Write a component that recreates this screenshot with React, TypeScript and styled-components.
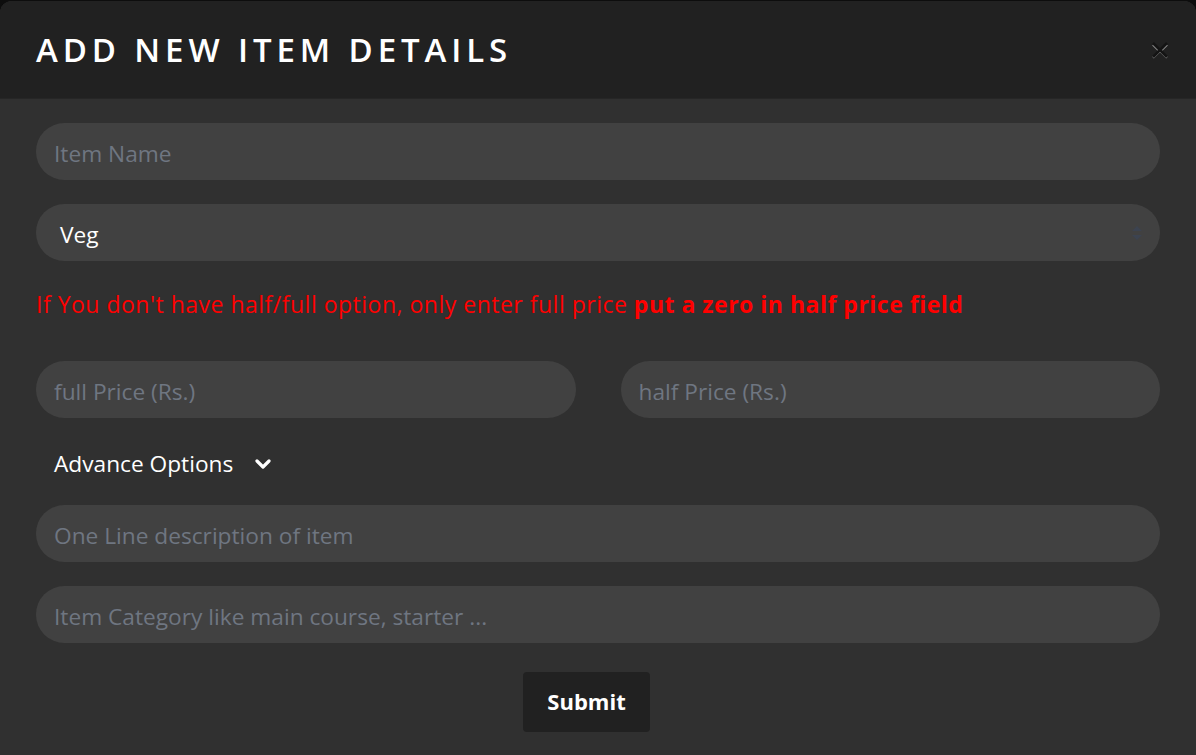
import React from 'react';
import styled, { createGlobalStyle } from 'styled-components';

const GlobalStyle = createGlobalStyle`
  body {
    margin: 0;
    background: #0d0d0d;
    font-family: 'Open Sans', 'Noto Sans', sans-serif;
  }
`;

const Modal = styled.div`
  margin-top: 1px;
  height: 754px;
  background: #303030;
  border-radius: 12px 12px 0 0;
  overflow: hidden;
  display: flex;
  flex-direction: column;
`;

const Header = styled.div`
  height: 97px;
  background: #212121;
  border-bottom: 1px solid #262626;
  display: flex;
  align-items: center;
  justify-content: space-between;
  padding: 0 22px 0 36px;
`;

const Title = styled.h1`
  margin: 0;
  color: #fff;
  font-size: 33px;
  font-weight: 600;
  letter-spacing: 4.9px;
`;

const CloseButton = styled.button`
  width: 28px;
  height: 28px;
  border: none;
  background: transparent;
  padding: 0;
  display: flex;
  align-items: center;
  justify-content: center;
`;

const Body = styled.form`
  padding: 24px 36px 0;
  display: flex;
  flex-direction: column;
`;

const Field = styled.input`
  box-sizing: border-box;
  width: 100%;
  height: 57px;
  border: none;
  outline: none;
  border-radius: 29px;
  background: #414141;
  color: #fff;
  padding: 4px 18px 0;
  font-family: inherit;
  font-size: 22.7px;
  &::placeholder {
    color: #6f7681;
  }
`;

const SelectBox = styled.div`
  position: relative;
  height: 57px;
  box-sizing: border-box;
  border-radius: 29px;
  background: #414141;
  color: #fff;
  display: flex;
  align-items: center;
  padding: 4px 24px 0;
  font-size: 22.7px;
  margin-top: 24px;
`;

const SelectArrows = styled.svg`
  position: absolute;
  right: 17px;
  top: 21px;
`;

const Warning = styled.p`
  margin: 0;
  height: 100px;
  box-sizing: border-box;
  padding-top: 27px;
  color: #ff0000;
  font-size: 23px;
  letter-spacing: 0.5px;
  b {
    font-weight: 700;
  }
`;

const PriceRow = styled.div`
  display: grid;
  grid-template-columns: 1fr 1fr;
  column-gap: 45px;
`;

const Toggle = styled.div`
  display: flex;
  align-items: center;
  gap: 22px;
  height: 87px;
  box-sizing: border-box;
  padding: 4px 0 0 18px;
  color: #fff;
  font-size: 22.7px;
`;

const Spacer = styled.div<{ $h: number }>`
  height: ${(p) => p.$h}px;
`;

const Actions = styled.div`
  display: flex;
  justify-content: center;
  padding: 29px 23px 0 0;
`;

const SubmitButton = styled.button`
  width: 127px;
  height: 60px;
  border: none;
  border-radius: 4px;
  background: #212121;
  color: #fff;
  padding: 0 0 3px;
  font-family: inherit;
  font-size: 22px;
  font-weight: 700;
`;

const App: React.FC = () => {
  return (
    <>
      <GlobalStyle />
      <Modal>
        <Header>
          <Title>ADD NEW ITEM DETAILS</Title>
          <CloseButton aria-label="close">
            <svg width="18" height="18" viewBox="0 0 18 18">
              <path d="M2 3.6 L9 10.6 L16 3.6 M2 16.6 L9 9.6 L16 16.6" stroke="#8c8c8c" strokeWidth="2.4" fill="none" />
              <path d="M2 2 L16 16 M16 2 L2 16" stroke="#141414" strokeWidth="2.8" fill="none" />
            </svg>
          </CloseButton>
        </Header>
        <Body>
          <Field placeholder="Item Name" />
          <SelectBox>
            Veg
            <SelectArrows width="12" height="16" viewBox="0 0 12 16">
              <path d="M1 6 L6 1 L11 6 Z M1 10 L6 15 L11 10 Z" fill="#3c4350" />
            </SelectArrows>
          </SelectBox>
          <Warning>
            If You don't have half/full option, only enter full price <b>put a zero in half price field</b>
          </Warning>
          <PriceRow>
            <Field placeholder="full Price (Rs.)" />
            <Field placeholder="half Price (Rs.)" />
          </PriceRow>
          <Toggle>
            Advance Options
            <svg width="16" height="12" viewBox="0 0 16 12">
              <path d="M2 3 L8 9 L14 3" stroke="#fff" strokeWidth="3.2" fill="none" strokeLinecap="round" strokeLinejoin="round" />
            </svg>
          </Toggle>
          <Field placeholder="One Line description of item" />
          <Spacer $h={24} />
          <Field placeholder="Item Category like main course, starter ..." />
          <Actions>
            <SubmitButton type="button">Submit</SubmitButton>
          </Actions>
        </Body>
      </Modal>
    </>
  );
};

export default App;
